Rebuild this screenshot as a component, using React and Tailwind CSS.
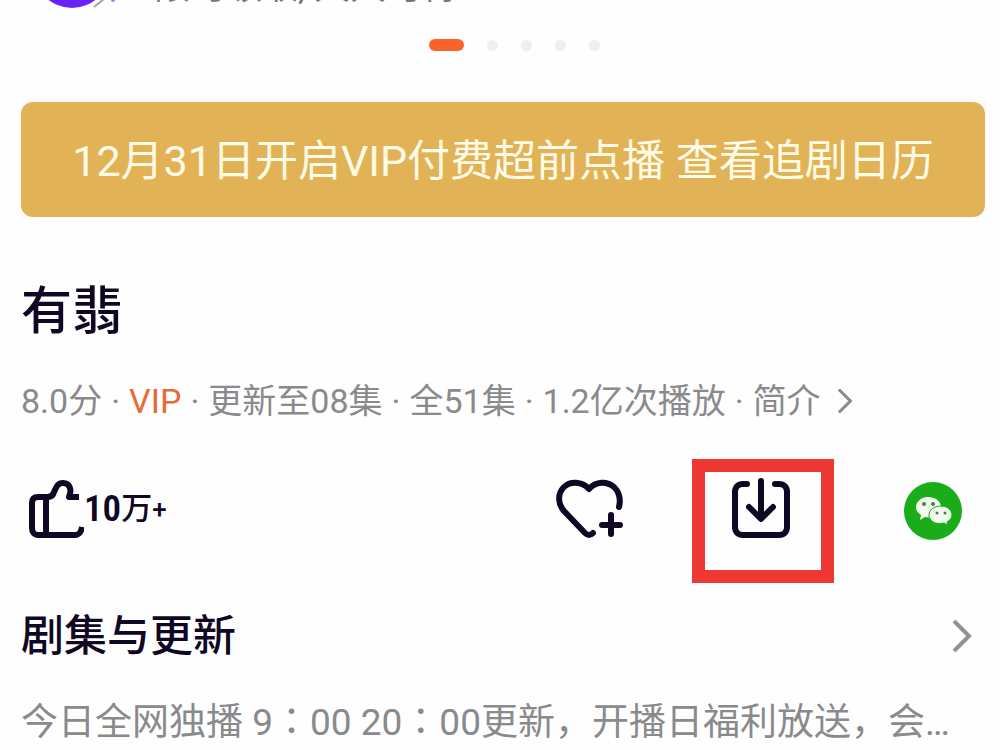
import React from 'react'

const meta = ['8.0分', 'VIP', '更新至08集', '全51集', '1.2亿次播放']

function Chevron({ className }) {
  return (
    <svg viewBox="0 0 20 34" fill="none" stroke="currentColor" className={className} aria-hidden="true">
      <path d="M2 2 L17 17 L2 32" strokeWidth="4" />
    </svg>
  )
}

// full-width colon, centred in its box
function Colon() {
  return <span lang="zh-TW" className="font-['Noto_Sans_CJK_TC',sans-serif]">：</span>
}

function BadgeIcon() {
  return (
    <svg width="84" height="76" viewBox="0 0 84 76" className="shrink-0" aria-hidden="true">
      <circle cx="38" cy="37" r="38" fill="#6a22f5" />
      <path d="M60 74 L70 66" stroke="#a99fae" strokeWidth="2" />
      <circle cx="79" cy="67" r="2" fill="#a77bf5" />
    </svg>
  )
}

function ThumbIcon() {
  return (
    <svg width="56" height="60" viewBox="0 0 56 60" fill="none" stroke="currentColor" strokeWidth="6" aria-hidden="true">
      <path d="M51 18 H41 C44 11 42 4 35 4 C29 4 28 9 26 13 C25 17 23 18 20 18 H10 C6 18 4 20 4 24 V49 C4 53 6 56 10 56 H46 C51 56 53 54 54 48" strokeLinejoin="round" />
      <path d="M18 18 V54" />
    </svg>
  )
}

function HeartPlusIcon() {
  return (
    <svg width="68" height="60" viewBox="0 0 68 60" fill="none" stroke="currentColor" strokeWidth="6" strokeLinecap="round" strokeLinejoin="round" aria-hidden="true">
      <path d="M64 28 C66 20 64 13 59 8 C52 2 41 2 34 10 C27 2 15 2 9 8 C2 15 3 25 9 32 L30 54 C33 57 36 56 38 54" />
      <path d="M56 36 V55 M47 46 H65" />
    </svg>
  )
}

function DownloadIcon() {
  return (
    <svg width="58" height="60" viewBox="0 0 58 60" fill="none" stroke="currentColor" strokeWidth="6" strokeLinecap="round" strokeLinejoin="round" aria-hidden="true">
      <path d="M15 6 H11 C6 6 3 9 3 14 V49 C3 54 6 57 11 57 H47 C52 57 55 54 55 49 V14 C55 9 52 6 47 6 H43" />
      <path d="M29 3 V40 M17 29 L29 41 L41 29" />
    </svg>
  )
}

function WechatIcon() {
  return (
    <svg width="60" height="60" viewBox="0 0 60 60" aria-hidden="true">
      <circle cx="30" cy="30" r="29" fill="#1aad19" />
      <path d="M25 16 C18 16 13 21 13 26 C13 30 15 32 18 34 L17 39 L22 36 C31 38 38 33 38 26 C38 20 32 16 25 16Z" fill="#f1faef" />
      <path d="M38 25 C31 25 26 29 26 34 C26 40 32 44 41 42 L45 44 L44 41 C47 39 49 37 49 34 C49 29 44 25 38 25Z" fill="#f1faef" stroke="#1aad19" strokeWidth="1" />
      <g fill="#4f7a4a">
        <circle cx="21" cy="23" r="2" />
        <circle cx="30" cy="23" r="2" />
        <circle cx="34" cy="32" r="1.5" />
        <circle cx="42" cy="32" r="1.5" />
      </g>
    </svg>
  )
}

export default function App() {
  return (
    <main className="min-h-screen overflow-hidden bg-[#fefefe] font-[Roboto,'Noto_Sans_CJK_SC',sans-serif] text-[#0f0724]">
      <div className="flex h-[9px] items-end gap-9 overflow-hidden pl-[34px]">
        <BadgeIcon />
        <p className="whitespace-nowrap text-[36px] leading-[44px] text-[#777]">限时领取, 天天可得</p>
      </div>

      <div className="mt-[30px] flex h-3 items-center justify-center gap-[23px] pl-7">
        <span className="h-3 w-[35px] rounded-full bg-[#fb6329]" />
        {[1, 2, 3, 4].map((i) => (
          <span key={i} className="size-[11px] rounded-full bg-[#f0eef1]" />
        ))}
      </div>

      <a href="#calendar" className="mt-[51px] mr-[15px] ml-[21px] flex h-[115px] items-center justify-center rounded-xl bg-[#e1b356] pt-1 text-[43px] whitespace-nowrap text-[#fffbe6]">
        12月31日开启VIP付费超前点播 查看追剧日历
      </a>

      <h1 className="mt-[62px] pl-[21px] text-[51px] leading-[66px] font-medium">有翡</h1>

      <div className="mt-[31px] flex items-center gap-[9px] pl-[21px] text-[34px] leading-[50px] whitespace-nowrap text-[#8a8a8c]">
        {meta.map((item) => (
          <React.Fragment key={item}>
            <span className={item === 'VIP' ? 'text-[#e66c35]' : ''}>{item}</span>
            <span>·</span>
          </React.Fragment>
        ))}
        <a href="#intro" className="flex items-center gap-4">
          简介
          <Chevron className="h-[26px] w-4" />
        </a>
      </div>

      <div className="mt-[33px] flex items-start pr-[37px] pl-7">
        <button className="mt-5 flex h-[60px] items-center" aria-label="点赞 10万+">
          <ThumbIcon />
          <span className="flex items-center font-['Liberation_Sans_Narrow','Roboto_Condensed','Noto_Sans_CJK_SC',sans-serif] text-[37px] font-semibold">
            10
            <span className="text-[31px] font-medium">万</span>
            <span className="font-[Roboto] text-[26px] font-medium">+</span>
          </span>
        </button>
        <div className="ml-auto flex items-start gap-[69px]">
          <button className="mt-5" aria-label="收藏">
            <HeartPlusIcon />
          </button>
          <button className="flex h-[124px] w-[142px] justify-center border-[13px] border-[#ed3833] pt-[6px] pr-1" aria-label="下载">
            <DownloadIcon />
          </button>
          <button className="mt-[22px]" aria-label="分享到微信">
            <WechatIcon />
          </button>
        </div>
      </div>

      <a href="#episodes" className="mt-[21px] flex items-center justify-between pr-7 pl-[21px]">
        <h2 className="text-[43px] leading-[64px] font-medium">剧集与更新</h2>
        <Chevron className="h-[34px] w-5 text-[#929292]" />
      </a>

      <p className="mt-6 truncate pr-9 pl-[21px] text-[37px] leading-[54px] text-[#8a8a8c]">
        今日全网独播 9<Colon />00 20<Colon />00更新，开播日福利放送，会员抢先看全集
      </p>
    </main>
  )
}
